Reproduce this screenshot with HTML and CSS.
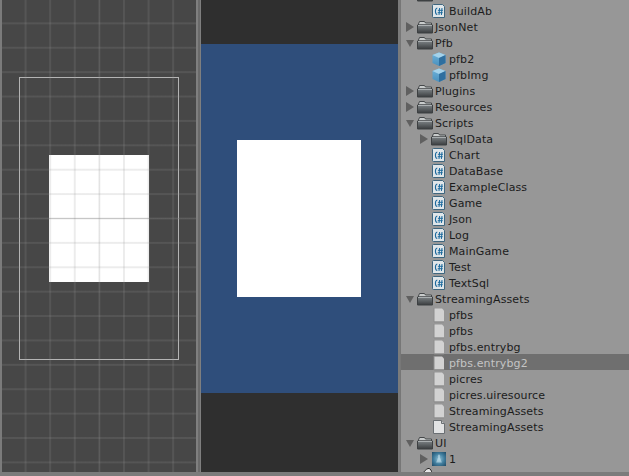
FILE: index.html
```html
<!DOCTYPE html>
<html lang="en">
<head>
  <meta charset="UTF-8">
  <title>Unity editor panes</title>
  <link rel="stylesheet" href="styles.css">
</head>
<body>

  <svg class="defs" width="0" height="0">
    <defs>
      <linearGradient id="folderFill" x1="0" y1="0" x2="0" y2="1">
        <stop offset="0" stop-color="#7d8386"/>
        <stop offset="1" stop-color="#3a3d3f"/>
      </linearGradient>
      <linearGradient id="cubeLeft" x1="0" y1="0" x2="0" y2="1">
        <stop offset="0" stop-color="#6fb4dc"/>
        <stop offset="1" stop-color="#4a90bd"/>
      </linearGradient>
      <radialGradient id="thumbFill" cx=".5" cy=".5" r=".7">
        <stop offset="0" stop-color="#8fc0d6"/>
        <stop offset=".55" stop-color="#3f7c9c"/>
        <stop offset="1" stop-color="#1f4a66"/>
      </radialGradient>
      <symbol id="i-folder" viewBox="0 0 16 16">
        <path d="M1.500 5l1-2.500h5l1 1.500h6v2H1.500z" fill="#c9cccc" stroke="#45484a"/>
        <path d="M.5 6h15v8H.5z" fill="url(#folderFill)" stroke="#3d4042"/>
        <path d="M1 6.500h14" stroke="#a9aeb0"/>
      </symbol>
      <symbol id="i-script" viewBox="0 0 16 16">
        <path d="M1.500 2.500q0-1 1-1h9l2 2v11h-11q-1 0-1-1z" fill="#e0e6e9" stroke="#3f667e"/>
        <path d="M6.300 5C3.800 5.400 3.800 11.100 6.300 11.500" fill="none" stroke="#1c6a9e" stroke-width="1.100"/>
        <path d="M8.600 5l-.6 7M11 5l-.6 7M6.900 7.300h5M6.700 9.700h5" fill="none" stroke="#1c6a9e"/>
      </symbol>
      <symbol id="i-cube" viewBox="0 0 16 16">
        <path d="M8 1.500l6.500 2.500v8L8 15 1.500 12V4z" fill="url(#cubeLeft)"/>
        <path d="M8 1.500l6.500 2.500L8 7 1.500 4z" fill="#a4d2ea"/>
        <path d="M8 7l6.500-3v8L8 15z" fill="#2f6f9f"/>
      </symbol>
      <symbol id="i-file" viewBox="0 0 16 16">
        <path d="M3 1.500h8l2 2v11H3z" fill="#d2d2d2"/>
        <path d="M3 1v14M3 15h10" stroke="#8c8c8c" fill="none"/>
      </symbol>
      <symbol id="i-text" viewBox="0 0 16 16">
        <path d="M2.500 1.500h8l3 3v10h-11z" fill="#e2e3e4" stroke="#6a6f73"/>
        <path d="M10.500 1.500v3h3" fill="#c4c6c8" stroke="#6a6f73"/>
      </symbol>
      <symbol id="i-thumb" viewBox="0 0 16 16">
        <path d="M1 1h14v14H1z" fill="url(#thumbFill)"/>
        <path d="M8 3.500c1.300 0 1.500 2 .9 3l2 5H5.100l2-5c-.6-1-.4-3 .9-3z" fill="#d8eef5" opacity=".5"/>
      </symbol>
      <symbol id="i-scene" viewBox="0 0 16 16">
        <path d="M3 16c1-7 4-13 8-14.500 1.500-.5 3 1 3.500 3L9 16z" fill="#e6e6e6" stroke="#222"/>
      </symbol>
    </defs>
  </svg>

  <div class="editor">

    <!-- scene view -->
    <section class="scene">
      <div class="camera-frame">
        <div class="sprite"></div>
      </div>
      <div class="scene-grid"></div>
    </section>

    <div class="splitter"></div>

    <!-- game view -->
    <section class="game">
      <div class="game-canvas">
        <div class="game-sprite"></div>
      </div>
    </section>

    <!-- project tree -->
    <section class="project">
      <ul class="tree">
        <li class="row"><i class="arrow open"></i><svg class="icon"><use href="#i-folder"/></svg></li>
        <li class="row sub"><i class="arrow none"></i><svg class="icon"><use href="#i-script"/></svg><span>BuildAb</span></li>
        <li class="row"><i class="arrow"></i><svg class="icon"><use href="#i-folder"/></svg><span>JsonNet</span></li>
        <li class="row"><i class="arrow open"></i><svg class="icon"><use href="#i-folder"/></svg><span>Pfb</span></li>
        <li class="row sub"><i class="arrow none"></i><svg class="icon"><use href="#i-cube"/></svg><span>pfb2</span></li>
        <li class="row sub"><i class="arrow none"></i><svg class="icon"><use href="#i-cube"/></svg><span>pfbImg</span></li>
        <li class="row"><i class="arrow"></i><svg class="icon"><use href="#i-folder"/></svg><span>Plugins</span></li>
        <li class="row"><i class="arrow"></i><svg class="icon"><use href="#i-folder"/></svg><span>Resources</span></li>
        <li class="row"><i class="arrow open"></i><svg class="icon"><use href="#i-folder"/></svg><span>Scripts</span></li>
        <li class="row sub"><i class="arrow"></i><svg class="icon"><use href="#i-folder"/></svg><span>SqlData</span></li>
        <li class="row sub"><i class="arrow none"></i><svg class="icon"><use href="#i-script"/></svg><span>Chart</span></li>
        <li class="row sub"><i class="arrow none"></i><svg class="icon"><use href="#i-script"/></svg><span>DataBase</span></li>
        <li class="row sub"><i class="arrow none"></i><svg class="icon"><use href="#i-script"/></svg><span>ExampleClass</span></li>
        <li class="row sub"><i class="arrow none"></i><svg class="icon"><use href="#i-script"/></svg><span>Game</span></li>
        <li class="row sub"><i class="arrow none"></i><svg class="icon"><use href="#i-script"/></svg><span>Json</span></li>
        <li class="row sub"><i class="arrow none"></i><svg class="icon"><use href="#i-script"/></svg><span>Log</span></li>
        <li class="row sub"><i class="arrow none"></i><svg class="icon"><use href="#i-script"/></svg><span>MainGame</span></li>
        <li class="row sub"><i class="arrow none"></i><svg class="icon"><use href="#i-script"/></svg><span>Test</span></li>
        <li class="row sub"><i class="arrow none"></i><svg class="icon"><use href="#i-script"/></svg><span>TextSql</span></li>
        <li class="row"><i class="arrow open"></i><svg class="icon"><use href="#i-folder"/></svg><span>StreamingAssets</span></li>
        <li class="row sub"><i class="arrow none"></i><svg class="icon"><use href="#i-file"/></svg><span>pfbs</span></li>
        <li class="row sub"><i class="arrow none"></i><svg class="icon"><use href="#i-file"/></svg><span>pfbs</span></li>
        <li class="row sub"><i class="arrow none"></i><svg class="icon"><use href="#i-file"/></svg><span>pfbs.entrybg</span></li>
        <li class="row sub selected"><i class="arrow none"></i><svg class="icon"><use href="#i-file"/></svg><span>pfbs.entrybg2</span></li>
        <li class="row sub"><i class="arrow none"></i><svg class="icon"><use href="#i-file"/></svg><span>picres</span></li>
        <li class="row sub"><i class="arrow none"></i><svg class="icon"><use href="#i-file"/></svg><span>picres.uiresource</span></li>
        <li class="row sub"><i class="arrow none"></i><svg class="icon"><use href="#i-file"/></svg><span>StreamingAssets</span></li>
        <li class="row sub"><i class="arrow none"></i><svg class="icon"><use href="#i-text"/></svg><span>StreamingAssets</span></li>
        <li class="row"><i class="arrow open"></i><svg class="icon"><use href="#i-folder"/></svg><span>UI</span></li>
        <li class="row sub"><i class="arrow"></i><svg class="icon"><use href="#i-thumb"/></svg><span>1</span></li>
        <li class="row"><i class="arrow none"></i><svg class="icon"><use href="#i-scene"/></svg></li>
      </ul>
    </section>

  </div>

</body>
</html>
```

FILE: styles.css
```css
html, body { margin:0; padding:0; }
body { width:629px; height:476px; overflow:hidden; background:#7b7b7b; font-family:"DejaVu Sans", sans-serif; }
.defs { display:block; height:0; }

.editor { display:flex; height:472px; padding-left:2px; }

/* scene view */
.scene { position:relative; width:194px; background-color:#474747; overflow:hidden; padding:77px 0 0 17px; box-sizing:border-box; }
.camera-frame { width:160px; height:283px; border:1px solid #b4b4b4; padding:77px 0 0 29px; box-sizing:border-box; }
.sprite { width:100px; height:127px; background:#fff; }
.scene-grid {
  position:absolute; inset:0;
  background-image:
    linear-gradient(to right, rgba(150,150,150,.1) 1px, transparent 1px),
    linear-gradient(to bottom, rgba(110,110,110,.3) 1px, transparent 1px),
    linear-gradient(to right, rgba(150,150,150,.18) 2px, transparent 2px),
    linear-gradient(to bottom, rgba(150,150,150,.18) 2px, transparent 2px);
  background-size:2px 100%, 100% 1px, 24.6px 100%, 100% 24.4px;
  background-repeat:no-repeat, no-repeat, repeat, repeat;
  background-position:97px 0, 0 218px, -2px 0, 0 -2px;
}

.splitter { width:5px; box-sizing:border-box; border-left:2px solid #7f7f7f; border-right:1px solid #7f7f7f; background:#6a6a6a; }

/* game view */
.game { width:197px; background:#2f2f2f; padding-top:44px; box-sizing:border-box; }
.game-canvas { height:349px; background:#2f4e7b; padding:96px 0 0 36px; box-sizing:border-box; }
.game-sprite { width:124px; height:157px; background:#fff; }

/* project tree */
.project { flex:1; min-width:0; margin-left:2px; background:#979797; border-left:1px solid #777; overflow:hidden; }
.tree { list-style:none; margin:-14px 0 0; padding:0; }
.row { display:flex; align-items:center; box-sizing:border-box; height:16px; padding:2px 0 0 5px; font-size:11px; letter-spacing:.13px; color:#1c1c1c; white-space:nowrap; }
.row.sub { padding-left:19px; }
.row.selected { background:#6f6f6f; color:#c4c4c4; }
.arrow { width:0; height:0; margin-right:3px; border-style:solid; border-width:5px 0 5px 8px; border-color:transparent transparent transparent #606060; }
.arrow.open { border-width:7px 4px 0 4px; border-color:#606060 transparent transparent transparent; }
.arrow.none { border:0; width:8px; }
.icon { width:16px; height:16px; flex:none; margin-right:2px; }
```
